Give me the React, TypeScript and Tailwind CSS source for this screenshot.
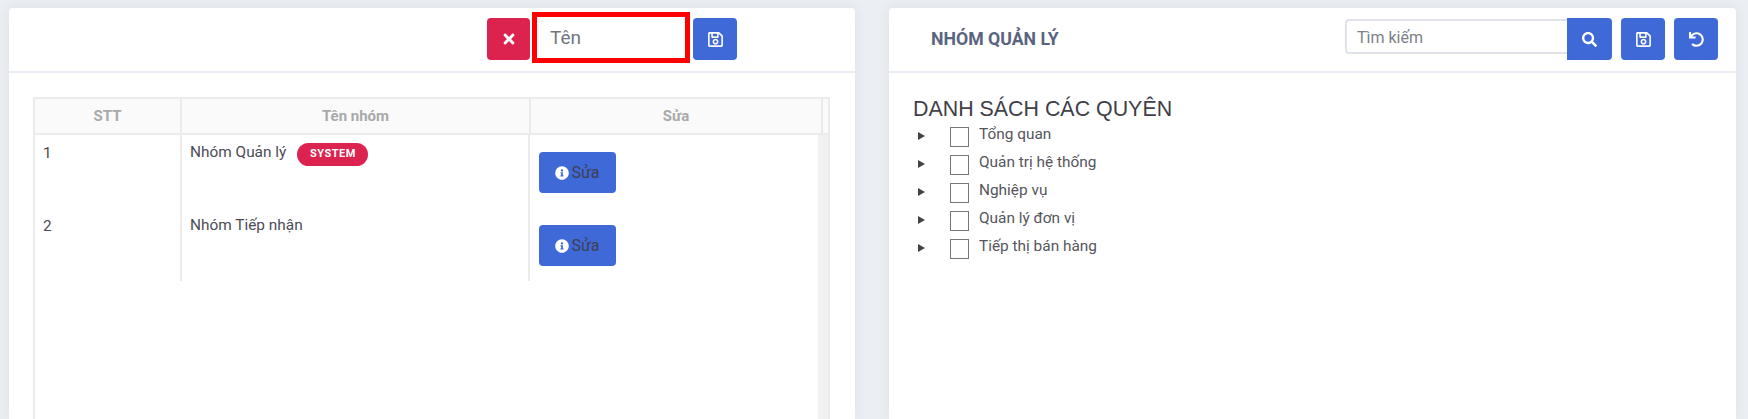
import React from 'react';
import { FaInfoCircle, FaRegSave, FaSearch, FaTimes, FaUndo } from 'react-icons/fa';

const groups = [
  { id: 1, name: 'Nhóm Quản lý', system: true },
  { id: 2, name: 'Nhóm Tiếp nhận', system: false },
];

const permissions = ['Tổng quan', 'Quản trị hệ thống', 'Nghiệp vụ', 'Quản lý đơn vị', 'Tiếp thị bán hàng'];

const IconButton = ({ children, className }: { children: React.ReactNode; className: string }) => (
  <button className={`flex h-[42px] items-center justify-center text-white ${className}`}>{children}</button>
);

const App = () => {
  return (
    <div className="flex h-[419px] gap-[34px] overflow-hidden bg-[#ebeef2] pt-2 pl-[9px] font-['Roboto',sans-serif]">
      <div className="flex w-[846px] flex-col rounded-t bg-white shadow-[0_0_12px_rgba(82,63,105,0.08)]">
        <div className="flex h-[65px] shrink-0 items-start border-b-2 border-[#e9edf5] pt-[4px] pl-[478px]">
          <IconButton className="mt-1.5 w-[43px] rounded bg-[#dc234f]">
            <FaTimes className="text-base" />
          </IconButton>
          <div className="mr-[3px] ml-0.5 flex h-[51px] w-[158px] items-center border-[5px] border-[#ff0000] pt-0.5 pl-[13px] text-[19px] text-[#6f7780]">
            Tên
          </div>
          <IconButton className="mt-1.5 w-11 rounded bg-[#4069d8]">
            <FaRegSave className="text-[17px]" />
          </IconButton>
        </div>

        <div className="flex-1 pt-6 pr-[25px] pl-6">
          <div className="h-full border-2 border-b-0 border-[#ebebeb]">
            <div className="grid h-[36px] grid-cols-[147px_349px_292px_1fr] border-b-2 border-[#ebebeb] bg-[#fafafa] text-[15px] font-bold text-[#a9a9a9]">
              <div className="flex items-center justify-center border-r-2 border-[#ebebeb]">STT</div>
              <div className="flex items-center justify-center border-r-2 border-[#ebebeb]">Tên nhóm</div>
              <div className="flex items-center justify-center border-r-2 border-[#ebebeb]">Sửa</div>
              <div />
            </div>
            <div className="flex h-full">
              <div className="flex-1">
                {groups.map((group) => (
                  <div key={group.id} className="grid h-[73px] grid-cols-[147px_348px_1fr] text-[15.4px] text-[#4b4b55]">
                    <div className="border-r-2 border-[#ebebeb] pt-[7px] pl-2">{group.id}</div>
                    <div className="flex items-start border-r-2 border-[#ebebeb] pt-[6px] pl-[8px]">
                      <span>{group.name}</span>
                      {group.system && (
                        <span className="mt-[2px] ml-[11px] flex h-[23px] w-[71px] items-center justify-center rounded-full bg-[#dc234f] text-[11px] font-bold tracking-[0.5px] text-white">
                          SYSTEM
                        </span>
                      )}
                    </div>
                    <div className="pt-[17px] pl-[9px]">
                      <button className="flex h-[41px] w-[77px] items-center justify-center gap-[2px] rounded bg-[#4069d8] text-base text-[#3d3f52]">
                        <FaInfoCircle className="text-sm text-white" />
                        Sửa
                      </button>
                    </div>
                  </div>
                ))}
              </div>
              <div className="w-[10px] bg-[#f1f1f1]" />
            </div>
          </div>
        </div>
      </div>

      <div className="flex w-[847px] flex-col rounded-t bg-white shadow-[0_0_12px_rgba(82,63,105,0.08)]">
        <div className="flex h-[65px] shrink-0 items-start justify-between border-b-2 border-[#e9edf5] pt-2.5 pr-[18px] pl-[42px]">
          <div className="flex h-[42px] items-center text-[17.7px] font-bold text-[#5a6480]">NHÓM QUẢN LÝ</div>
          <div className="flex gap-[9px]">
            <div className="flex">
              <div className="mt-px flex h-[35px] w-[222px] items-center rounded-l border-2 border-r-0 border-[#dfe2e8] pt-0.5 pl-[10px] text-base text-[#7b8188]">
                Tìm kiếm
              </div>
              <IconButton className="w-[45px] rounded-r bg-[#4069d8]">
                <FaSearch className="text-[15px]" />
              </IconButton>
            </div>
            <IconButton className="w-11 rounded bg-[#4069d8]">
              <FaRegSave className="text-[17px]" />
            </IconButton>
            <IconButton className="w-11 rounded bg-[#4069d8]">
              <FaUndo className="text-[15px]" />
            </IconButton>
          </div>
        </div>

        <div className="pt-[23px] pl-6">
          <h3 className="text-[21.4px] leading-[27px] font-['Liberation_Sans',sans-serif] text-[#404048]">DANH SÁCH CÁC QUYÊN</h3>
          <ul className="mt-[3px]">
            {permissions.map((item) => (
              <li key={item} className="flex h-7 items-start">
                <span className="mt-[6px] ml-[5px] h-0 w-0 border-y-[4px] border-l-[7px] border-y-transparent border-l-[#444]" />
                <span className="mt-[1px] ml-[25px] h-5 w-[19px] border border-[#777]" />
                <span className="ml-[10px] text-[15.4px] leading-4 text-[#55555c]">{item}</span>
              </li>
            ))}
          </ul>
        </div>
      </div>
    </div>
  );
};

export default App;
